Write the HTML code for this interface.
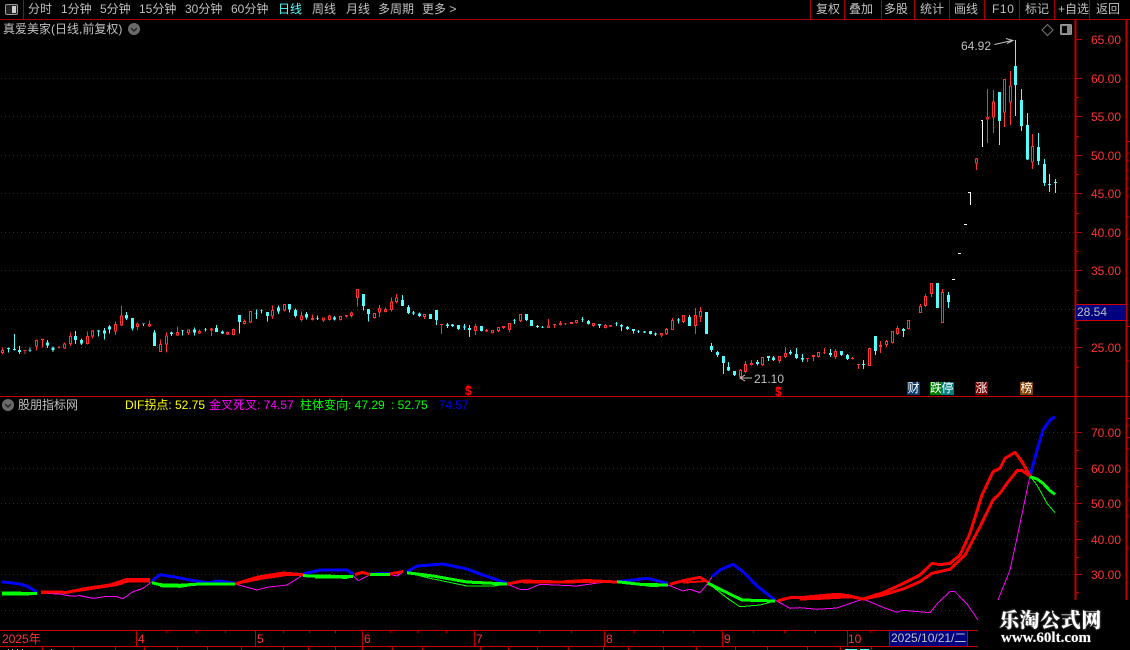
<!DOCTYPE html>
<html><head><meta charset="utf-8"><style>
html,body{margin:0;padding:0;background:#000;width:1130px;height:650px;overflow:hidden}
#a{position:relative;width:1130px;height:650px;overflow:hidden;background:#000}
svg{position:absolute;left:0;top:0}
.t{position:absolute;white-space:nowrap;font:12px/14px "Liberation Sans","WenQuanYi Zen Hei","Noto Sans CJK SC",sans-serif;color:#c0c0c0}
.r{color:#f33}
.b{width:13px;height:13px;color:#fff;text-align:center;line-height:13px}
.cw{stroke:#54ffff;stroke-width:3;fill:none}
.cb{stroke:#54ffff;stroke-width:9;fill:none}
.rw{stroke:#f33;stroke-width:3;fill:none}
.rb{stroke:#f33;stroke-width:3;fill:#000}
.g{stroke:#a00000;stroke-width:1;stroke-dasharray:1 3;fill:none}
.l{fill:none;stroke-linejoin:round}
</style></head><body><div id="a">
<svg width="1130" height="650" viewBox="0 0 1130 650">
<g shape-rendering="crispEdges">
<path class="g" d="M1 78.5H1075M1 116.5H1075M1 155.5H1075M1 193.5H1075M1 232.5H1075M1 270.5H1075M1 309.5H1075M1 347.5H1075M1 432.5H1075M1 468.5H1075M1 503.5H1075M1 539.5H1075M1 574.5H1075M1 610.5H978"/>
<path stroke="#a80000" fill="none" d="M0 19.5H1130M23.5 0V19M810.5 0V19M844.5 0V19M881.5 0V19M914.5 0V19M949.5 0V19M984.5 0V19M1019.5 0V19M1054.5 0V19M1089.5 0V19"/>
<path stroke="#c00000" stroke-width="2" fill="none" d="M1075.5 19V600M1126.5 19V600"/>
<path stroke="#c80000" fill="none" d="M0 396.5H1130M0 630.5H978M0 646.5H978"/>
<path stroke="#c00000" fill="none" d="M1075 39.5H1082M1075 78.5H1082M1075 116.5H1082M1075 155.5H1082M1075 193.5H1082M1075 232.5H1082M1075 270.5H1082M1075 347.5H1082M1075 97.5H1079M1075 136.5H1079M1075 174.5H1079M1075 213.5H1079M1075 251.5H1079M1075 290.5H1079M1075 328.5H1079M1075 367.5H1079M1075 432.5H1082M1075 468.5H1082M1075 503.5H1082M1075 539.5H1082M1075 574.5H1082M1075 450.5H1079M1075 486.5H1079M1075 521.5H1079M1075 557.5H1079M1075 592.5H1079"/>
<path stroke="#c00000" fill="none" d="M1126 141.5H1130M1126 153.5H1129M1126 160.5H1129M1126 170.5H1129M1126 178.5H1129M1126 188.5H1129M1126 196.5H1129M1126 216.5H1129M1126 239.5H1129M1126 326.5H1130M1126 360.5H1129M1126 418.5H1130M1126 425.5H1129M1126 437.5H1130M1126 448.5H1129M1126 470.5H1129M1126 486.5H1129M1126 500.5H1129M1126 516.5H1129M1126 548.5H1129"/>
<path stroke="#c00000" fill="none" d="M136.5 630V646M255.5 630V646M362.5 630V646M474.5 630V646M604.5 630V646M722.5 630V646M847.5 630V646M166.5 630V633M196.5 630V633M225.5 630V633M283.5 630V633M309.5 630V633M335.5 630V633M390.5 630V633M418.5 630V633M446.5 630V633M539.5 630V633M571.5 630V633M634.5 630V633M663.5 630V633M693.5 630V633M753.5 630V633M784.5 630V633M815.5 630V633M870.5 630V633M42.5 646V650M73.5 646V650M115.5 646V650M144.5 646V650M177.5 646V650M207.5 646V650M241.5 646V650M283.5 646V650M308.5 646V650M335.5 646V650M362.5 646V650M392.5 646V650M422.5 646V650M480.5 646V650M508.5 646V650M537.5 646V650M568.5 646V650M603.5 646V650M628.5 646V650M663.5 646V650M696.5 646V650M735.5 646V650M767.5 646V650M807.5 646V650M840.5 646V650M871.5 646V650"/>
<path stroke="#bbb" fill="none" d="M8.5 649V650M12.5 649V650M17.5 649V650M22.5 649V650M51.5 649V650"/>
<path stroke="#54ffff" fill="none" d="M845 649.5H857M860 649.5H869"/>
<rect x="1076" y="305" width="50" height="15" fill="#000080"/>
<path stroke="#d00000" fill="none" d="M1076 304.5H1127M1076 320.5H1127"/>
<rect x="889.5" y="630.5" width="78" height="16" fill="#000080" stroke="#c00000"/>

<!-- candles A -->
<g transform="translate(0 290) scale(.33333)">
<path class="cw" d="M25 172V188M43 132V182M58 168V192M90 172V186M143 150V174M159 170V186M226 123V162M244 146V165M295 120V140M313 114V148M328 105V130M379 66V90M397 84V122M430 100V108M463 120V168M514 124V138M547 120V136M583 112V137M616 114V125M649 105V126M667 122V132M718 75V130M769 58V87M784 58V70M802 66V94M835 46V72M868 42V68M886 56V82M919 66V88M952 77V90M1003 78V92"/>
<path class="cb" d="M25 174V177M43 177V180M58 180V186M90 180V182M143 158V166M159 172V180M226 138V150M244 150V160M295 122V125M313 121V130M328 110V118M379 75V85M397 84V115M430 100V102M463 128V168M514 128V132M547 120V122M583 118V128M616 118V120M649 114V126M667 125V131M718 75V96M769 70V72M784 61V63M802 66V78M835 52V64M868 42V58M886 60V78M919 72V82M952 84V86M1003 82V88"/>
<path class="rw" d="M7 172V192M75 180V192M109 148V182M127 145V172M177 168V176M193 158V177M211 127V168M262 124V163M278 120V146M346 94V135M364 48V108M412 98V120M448 92V111M481 148V186M499 127V188M532 110V138M565 118V135M598 118V132M634 114V138M682 124V135M700 115V137M733 88V104M751 63V99M817 47V87M853 42V64M904 64V94M937 74V91M970 82V96M988 75V91M1021 76V91M1039 75V83M1054 65V82"/>
<path class="rb" d="M4 182h6V188h-6zM72 181h6V182h-6zM106 152h6V168h-6zM124 148h6V149h-6zM174 173h6V173h-6zM190 162h6V174h-6zM208 140h6V160h-6zM259 140h6V160h-6zM275 123h6V138h-6zM343 104h6V123h-6zM361 78h6V105h-6zM409 102h6V110h-6zM445 104h6V108h-6zM478 164h6V184h-6zM496 138h6V162h-6zM529 128h6V135h-6zM562 120h6V128h-6zM595 124h6V129h-6zM631 117h6V120h-6zM679 128h6V132h-6zM697 119h6V134h-6zM730 94h6V101h-6zM748 65h6V96h-6zM814 62h6V78h-6zM850 44h6V60h-6zM901 78h6V88h-6zM934 86h6V88h-6zM967 84h6V90h-6zM985 78h6V88h-6zM1018 80h6V88h-6zM1036 77h6V78h-6zM1051 69h6V76h-6z"/>
</g>
<!-- candles B -->
<g transform="translate(350 290) scale(.33333)">
<path class="cw" d="M40 12V62M55 57V95M157 15V48M175 45V72M190 63V75M208 68V81M241 72V87M259 60V105M292 99V114M307 102V111M325 105V120M343 102V120M358 105V141M394 108V124M493 87V102M529 72V93M544 90V108M562 105V114M577 108V114M697 81V96M715 90V103M748 102V114M799 96V108M814 102V123M832 108V120M850 117V130M865 120V129M883 123V129M901 123V133M916 128V138M985 84V100M1018 75V108M1069 66V132"/>
<path class="cb" d="M40 12V48M55 57V72M157 30V48M175 51V69M190 68V70M208 71V78M241 72V87M259 60V90M292 104V108M307 104V108M325 105V117M343 109V113M358 114V120M394 108V123M493 90V92M529 72V90M544 90V108M562 108V111M577 111V113M697 87V89M715 93V102M748 102V107M799 99V101M814 105V110M832 111V117M850 117V123M865 123V125M883 125V127M901 123V132M916 131V134M985 88V92M1018 81V108M1069 66V132"/>
<path class="rw" d="M22 0V50M73 69V85M88 45V81M106 52V67M124 22V65M139 12V40M223 72V87M274 102V132M376 102V135M409 117V126M427 120V130M445 111V126M460 108V117M478 99V126M511 72V96M595 87V114M613 102V114M631 93V106M646 99V105M664 96V102M679 90V100M730 99V111M766 102V115M781 105V111M934 129V141M949 114V135M967 84V120M1000 75V99M1036 54V132M1051 51V96"/>
<path class="rb" d="M19 -2h6V22h-6zM70 71h6V82h-6zM85 56h6V66h-6zM103 59h6V64h-6zM121 36h6V58h-6zM136 24h6V34h-6zM220 74h6V80h-6zM271 103h6V104h-6zM373 110h6V121h-6zM406 122h6V123h-6zM424 122h6V127h-6zM442 113h6V121h-6zM457 110h6V112h-6zM475 101h6V118h-6zM508 74h6V91h-6zM592 108h6V112h-6zM610 103h6V104h-6zM628 101h6V103h-6zM643 100h6V100h-6zM661 98h6V100h-6zM676 92h6V97h-6zM727 101h6V106h-6zM763 107h6V112h-6zM778 107h6V108h-6zM931 131h6V135h-6zM946 119h6V131h-6zM964 92h6V118h-6zM997 77h6V94h-6zM1033 77h6V106h-6zM1048 65h6V79h-6z"/>
</g>
<!-- candles C -->
<g transform="translate(680 300) scale(.33333)">
<path class="cw" d="M94 129V156M112 153V171M130 168V222M145 186V213M163 213V228M232 180V196M265 168V183M280 168V183M331 150V165M349 144V177M367 162V186M451 147V171M484 153V168M502 162V180M550 180V207M586 108V165M670 84V111"/>
<path class="cb" d="M94 138V150M112 156V165M130 168V189M145 201V211M163 213V225M232 186V192M265 168V174M280 172V180M331 156V160M349 162V174M367 174V178M451 159V165M484 153V165M502 165V177M550 192V195M586 108V153M670 87V93"/>
<path class="rw" d="M181 207V234M196 183V219M214 180V196M247 171V198M298 168V189M316 141V174M382 174V186M400 165V183M415 156V172M433 144V162M466 147V177M517 171V178M535 192V207M568 144V198M601 123V159M619 120V141M637 93V130M652 78V105M685 60V88"/>
<path class="rb" d="M178 212h6V229h-6zM193 194h6V214h-6zM211 191h6V193h-6zM244 173h6V193h-6zM295 170h6V181h-6zM313 161h6V169h-6zM379 175h6V176h-6zM397 167h6V169h-6zM412 158h6V169h-6zM430 157h6V157h-6zM463 155h6V169h-6zM514 175h6V176h-6zM532 193h6V194h-6zM565 146h6V196h-6zM598 136h6V140h-6zM616 125h6V133h-6zM634 95h6V127h-6zM649 86h6V100h-6zM682 62h6V85h-6z"/>
</g>
<!-- candles D -->
<g transform="translate(880 230) scale(.33333)">
<path class="cw" d="M172 159V234M205 186V234"/>
<path class="cb" d="M172 159V234M205 195V216"/>
<path class="rw" d="M121 222V249M136 192V231M154 159V201M187 177V279"/>
<path class="rb" d="M118 230h6V247h-6zM133 200h6V226h-6zM151 161h6V190h-6zM184 188h6V277h-6z"/>
</g>
<!-- candles E -->
<g transform="translate(880 60) scale(.33333)">
<path class="cw" d="M358 96V255M406 -60V168M424 87V213M442 159V300M475 219V315M493 297V378M508 342V396M526 357V399"/>
<path class="cb" d="M358 96V183M406 18V75M424 120V198M442 195V298M475 261V303M493 312V369M508 372V375M526 366V369"/>
<path class="rw" d="M289 294V330M322 87V249M340 90V219M373 57V201M391 33V195M457 222V327"/>
<path class="rb" d="M286 297h6V309h-6zM319 173h6V177h-6zM337 126h6V171h-6zM370 59h6V156h-6zM388 78h6V126h-6zM454 260h6V306h-6z"/>
</g>
<path stroke="#fff" fill="none" d="M952 279.5H955M958 253.5H961M964 224.5H967M968 192.5H971M970.5 192V205M981 120.5H983M982.5 120V147"/>
</g>

<!-- indicator lines -->
<g shape-rendering="crispEdges">
<g stroke-width="1" fill="none" stroke="#f0f">
<polyline class="l" points="41,593.3 60,594 70,596 80,595.7 93,598.3 107,596.3 117,596.7 123,598.7 133,591.7 143,588.3 152,581.7"/>
<polyline class="l" points="235,584 257,590 267,587.3 287,585 303,575"/>
<polyline class="l" points="353,575.3 358,580.7 370,574.7 390,574.3 397,576 403,572"/>
<polyline class="l" points="507,584 520,589.3 528,589.3 540,584.3 577,586 600,582.7 617,581.7"/>
<polyline class="l" points="668,585 683,591 690,589.3 700,592.7 708,583.3 712,576.7"/>
<polyline class="l" points="775,600 790,608.3 800,607.7 817,609.3 837,608 863,599 883,607.3 897,612.3 903,610.3 930,612.7 938,602.7 950,591.7 955,591.7 967,604 978,620"/>
<polyline class="l" points="998,600 1010,570 1018,533.3 1027,490 1030,476"/>
</g>
<g stroke="#0000ff" stroke-width="3" fill="none" stroke-linejoin="round">
<polyline points="2,582 10,582.7 20,584 28,586.7 37,592.3"/>
<polyline points="152,580.7 160,574.7 173,576.7 190,580 207,582.7 220,581 235,583.3"/>
<polyline points="303,574 320,570 347,570 353,574"/>
<polyline points="370,574 390,573.3"/>
<polyline points="407,571.7 417,566 443,564 467,569 483,575 507,583.3"/>
<polyline points="617,581.7 633,580 647,578.3 668,583.3"/>
<polyline points="712,576.7 720,570 733,564.3 743,571.7 757,586 775,600"/>
<polyline points="1030,476 1037,450 1043,430 1050,420 1055,416.7"/>
</g>
<g stroke="#00ff00" stroke-width="3" fill="none" stroke-linejoin="round">
<polyline points="2,592.8 23,593.3 37,593.7"/>
<polyline points="152,582.7 160,584.7 180,585.3 200,584 235,584"/>
<polyline points="303,575.7 353,576.7"/>
<polyline points="370,574.3 390,574.3"/>
<polyline points="407,572.7 433,576 467,582 507,584"/>
<polyline points="617,581.7 640,584.3 668,585"/>
<polyline points="708,583.3 723,590.7 742,600 775,601"/>
<polyline points="1030,476.7 1037,479 1043,483.3 1050,490.7 1055,494.3"/>
</g>
<g stroke="#00ff00" stroke-width="1" fill="none">
<polyline points="2,595 27,595 37,593.7"/>
<polyline points="160,586.7 180,587.3 193,585.3 213,584.7 235,584"/>
<polyline points="315,578 347,578.3 353,576.7"/>
<polyline points="407,572.7 430,578.3 467,586 493,586 507,584"/>
<polyline points="640,585 653,586.7 668,585.5"/>
<polyline points="708,583 727,598 740,606.7 760,605 775,601"/>
<polyline points="1030,476.7 1037,485 1047,503.3 1055,512.7"/>
</g>
<g stroke="#ff0000" stroke-width="3" fill="none" stroke-linejoin="round">
<polyline points="41,592 67,592.3 87,588.3 110,585 127,579.3 150,579.3"/>
<polyline points="235,584 257,577.3 283,573 303,574.7"/>
<polyline points="355,574.7 362,572.3 370,574.3"/>
<polyline points="390,574 403,571.5"/>
<polyline points="507,584 523,581 560,582 587,580.5 617,582"/>
<polyline points="670,584.3 683,580.7 700,577.3 708,582.3"/>
<polyline points="778,600.7 790,597.7 800,597.7 820,595.7 838,594.3 850,596 863,599 883,592.7 900,585 920,575 932,563.3 940,564.7 950,563.3 960,555 970,533.3 982,495 993,471.7 1000,468.3 1005,458.3 1015,452.3 1022,461.7 1030,476"/>
<polyline points="800,599 820,598.3 850,596.7 863,599 883,595 903,589 920,581.7 932,573.3 950,569.3 965,555 980,526.7 993,500 1000,493.3 1007,483.3 1017,470.7 1022,470.7 1030,476"/>
</g>
<g stroke="#ff0000" stroke-width="2" fill="none">
<polyline points="41,593 73,591.7 117,585 127,581.7 150,581.7"/>
<polyline points="240,583 260,579 287,575 303,574.7"/>
<polyline points="523,582.6 560,582.4 600,582"/>
<polyline points="683,582.7 707,581"/>
</g>
</g>
<path d="M994.5 44.5L1012 40.5M1006 38.5l7 2l-6 3" stroke="#c0c0c0" fill="none"/>
<path d="M752 378H740M745 375l-5 3l5 3" stroke="#c0c0c0" fill="none"/>
<!-- $ hats -->
<path d="M468 384.5v2M466 386.5h5" stroke="#f00" fill="none" shape-rendering="crispEdges"/>
<path d="M778 385.5v2M776 387.5h5" stroke="#f00" fill="none" shape-rendering="crispEdges"/>
<!-- icons -->
<rect x="5.5" y="4.5" width="12" height="10" rx="1.5" fill="#222" stroke="#999"/>
<rect x="12" y="6" width="4" height="7" fill="#ccc"/>
<rect x="1060.5" y="24.5" width="11" height="10" rx="1" fill="#888" stroke="#999"/>
<rect x="1062" y="26" width="5" height="7" fill="#000"/>
<path d="M1047.5 24.5L1053 30L1047.5 35.5L1042 30Z" fill="none" stroke="#777"/>
<circle cx="134" cy="29" r="6" fill="#6a6a6a"/><path d="M131 28l3 3l3-3" stroke="#222" stroke-width="1.4" fill="none"/>
<circle cx="8" cy="405" r="6" fill="#6a6a6a"/><path d="M5 404l3 3l3-3" stroke="#222" stroke-width="1.4" fill="none"/>
<rect x="978" y="600" width="152" height="50" fill="#000"/>
</svg>

<span class="t" style="left:28px;top:2px">分时</span>
<span class="t" style="left:61px;top:2px">1分钟</span>
<span class="t" style="left:100px;top:2px">5分钟</span>
<span class="t" style="left:139px;top:2px">15分钟</span>
<span class="t" style="left:185px;top:2px">30分钟</span>
<span class="t" style="left:231px;top:2px">60分钟</span>
<span class="t" style="left:278px;top:2px;color:#5ff">日线</span>
<span class="t" style="left:312px;top:2px">周线</span>
<span class="t" style="left:346px;top:2px">月线</span>
<span class="t" style="left:378px;top:2px">多周期</span>
<span class="t" style="left:422px;top:2px">更多 &gt;</span>
<span class="t" style="left:816px;top:2px">复权</span>
<span class="t" style="left:849px;top:2px">叠加</span>
<span class="t" style="left:884px;top:2px">多股</span>
<span class="t" style="left:920px;top:2px">统计</span>
<span class="t" style="left:954px;top:2px">画线</span>
<span class="t" style="left:992px;top:2px;letter-spacing:.6px">F10</span>
<span class="t" style="left:1025px;top:2px">标记</span>
<span class="t" style="left:1058px;top:2px">+自选</span>
<span class="t" style="left:1096px;top:2px">返回</span>
<span class="t" style="left:3px;top:22px">真爱美家(日线,前复权)</span>

<span class="t" style="left:961px;top:39px">64.92</span>
<span class="t" style="left:754px;top:372px">21.10</span>
<span class="t r" style="left:1091px;top:33px">65.00</span>
<span class="t r" style="left:1091px;top:72px">60.00</span>
<span class="t r" style="left:1091px;top:110px">55.00</span>
<span class="t r" style="left:1091px;top:149px">50.00</span>
<span class="t r" style="left:1091px;top:187px">45.00</span>
<span class="t r" style="left:1091px;top:226px">40.00</span>
<span class="t r" style="left:1091px;top:264px">35.00</span>
<span class="t r" style="left:1091px;top:341px">25.00</span>
<span class="t" style="left:1077px;top:305px">28.54</span>
<span class="t r" style="left:1091px;top:426px">70.00</span>
<span class="t r" style="left:1091px;top:462px">60.00</span>
<span class="t r" style="left:1091px;top:497px">50.00</span>
<span class="t r" style="left:1091px;top:533px">40.00</span>
<span class="t r" style="left:1091px;top:568px">30.00</span>

<span class="t b" style="left:907px;top:382px;background:#0b3c6c">财</span>
<span class="t b" style="left:930px;top:382px;background:#008000;width:11px">跌</span>
<span class="t b" style="left:941px;top:382px;background:#008080">停</span>
<span class="t b" style="left:975px;top:382px;background:#800000">涨</span>
<span class="t b" style="left:1020px;top:382px;background:#844000">榜</span>
<span class="t" style="left:465px;top:384px;color:#f00;font-weight:bold">$</span>
<span class="t" style="left:775px;top:385px;color:#f00;font-weight:bold">$</span>

<span class="t" style="left:18px;top:398px">股朋指标网</span>
<span class="t" style="left:125px;top:398px;color:#ff0">DIF拐点: 52.75</span>
<span class="t" style="left:209px;top:398px;color:#f0f">金叉死叉: 74.57</span>
<span class="t" style="left:300px;top:398px;color:#0f0">柱体变向: 47.29</span>
<span class="t" style="left:391px;top:398px;color:#0f0">: 52.75</span>
<span class="t" style="left:432px;top:398px;color:#00f">: 74.57</span>

<span class="t" style="left:2px;top:632px;color:#f33">2025年</span>
<span class="t" style="left:138px;top:632px;color:#f33">4</span>
<span class="t" style="left:257px;top:632px;color:#f33">5</span>
<span class="t" style="left:364px;top:632px;color:#f33">6</span>
<span class="t" style="left:476px;top:632px;color:#f33">7</span>
<span class="t" style="left:606px;top:632px;color:#f33">8</span>
<span class="t" style="left:724px;top:632px;color:#f33">9</span>
<span class="t" style="left:848px;top:632px;color:#f33">10</span>
<span class="t" style="left:891px;top:631px">2025/10/21/二</span>

<span class="t" style="left:999px;top:607px;font:900 20px/24px 'Noto Serif CJK SC',serif;letter-spacing:.6px;color:#fff;text-shadow:0 0 2px #888">乐淘公式网</span>
<span class="t" style="left:1001px;top:630px;font:bold 15px/16px 'Liberation Serif',serif;color:#fff;text-shadow:0 0 1px #888">www.60lt.com</span>
</div></body></html>
